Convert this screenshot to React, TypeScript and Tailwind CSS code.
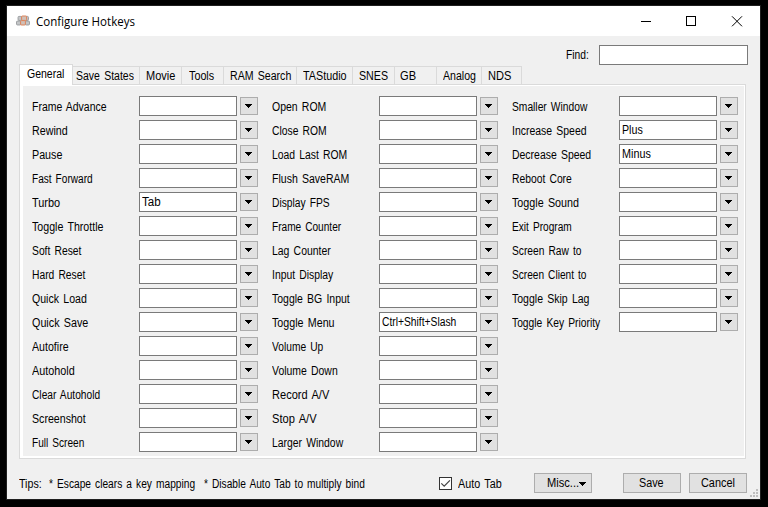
import { useLayoutEffect, useRef, useState } from "react";

/** Single line of text condensed or widened to a fixed advance width. */
function Fit({ w, children }: { w: number; children: string }) {
  const ref = useRef<HTMLSpanElement>(null);
  const [scale, setScale] = useState(1);
  useLayoutEffect(() => {
    if (ref.current) setScale(w / ref.current.offsetWidth);
  }, [w, children]);
  return (
    <span className="block shrink-0 whitespace-pre" style={{ width: w }}>
      <span ref={ref} className="inline-block origin-left align-top" style={{ transform: `scaleX(${scale})` }}>
        {children}
      </span>
    </span>
  );
}

function Arrow() {
  return (
    <svg width="7" height="4" viewBox="0 0 7 4" shapeRendering="crispEdges" className="block shrink-0">
      <path d="M0 0h7v1H0zM1 1h5v1H1zM2 2h3v1H2zM3 3h1v1H3z" fill="#000" />
    </svg>
  );
}

type Hotkey = [label: string, width: number, value?: string, valueWidth?: number];

const columns: Hotkey[][] = [
  [
    ["Frame Advance", 74.5], ["Rewind", 36], ["Pause", 30], ["Fast Forward", 60.5], ["Turbo", 28, "Tab", 18.5],
    ["Toggle Throttle", 71.5], ["Soft Reset", 49.5], ["Hard Reset", 53.5], ["Quick Load", 55], ["Quick Save", 56],
    ["Autofire", 36.5], ["Autohold", 42.5], ["Clear Autohold", 68.5], ["Screenshot", 53.5], ["Full Screen", 52.5],
  ],
  [
    ["Open ROM", 54.5], ["Close ROM", 54.5], ["Load Last ROM", 75.5], ["Flush SaveRAM", 77.5], ["Display FPS", 57.5],
    ["Frame Counter", 69.5], ["Lag Counter", 58.5], ["Input Display", 61.5], ["Toggle BG Input", 78],
    ["Toggle Menu", 62.5, "Ctrl+Shift+Slash", 74], ["Volume Up", 51.5], ["Volume Down", 66], ["Record A/V", 57.5],
    ["Stop A/V", 44.5], ["Larger Window", 71.5],
  ],
  [
    ["Smaller Window", 75.5], ["Increase Speed", 74.5, "Plus", 20.5], ["Decrease Speed", 79.5, "Minus", 28.5],
    ["Reboot Core", 59.5], ["Toggle Sound", 67], ["Exit Program", 60], ["Screen Raw to", 69.5],
    ["Screen Client to", 74.5], ["Toggle Skip Lag", 77.5], ["Toggle Key Priority", 88],
  ],
];

function HotkeyRow({ item }: { item: Hotkey }) {
  const [label, width, value, valueWidth] = item;
  return (
    <div className="flex h-5 items-center">
      <div className="w-[107px] pt-px">
        <Fit w={width}>{label}</Fit>
      </div>
      <div className="flex h-5 w-[98px] items-center border border-[#7a7a7a] bg-white pl-0.5">
        {value && <Fit w={valueWidth ?? 0}>{value}</Fit>}
      </div>
      <button className="ml-[3px] flex h-[18px] w-[18px] items-center justify-center border border-[#adadad] bg-[#e1e1e1] pr-px">
        <Arrow />
      </button>
    </div>
  );
}

export default function App() {
  return (
    <div className="h-[507px] w-[768px] overflow-hidden bg-black pl-1.5 pt-[5px] font-['Liberation_Sans',Arial,sans-serif] text-[12.5px] leading-5 text-black [word-spacing:1.5px]">
      <div className="flex h-[495px] w-[755px] flex-col border border-[#1f1f1f] bg-[#f0f0f0]">
        <div className="flex h-[30px] shrink-0 items-center bg-white pl-[9px] font-['Open_Sans','Noto_Sans',sans-serif] text-[12px] [word-spacing:0px]">
          <svg width="14" height="12" viewBox="0 0 14 12" className="mr-[6px] shrink-0">
            <g fill="#c4c6c8" stroke="#8f9296" strokeWidth=".8">
              <rect x="2" y="1.4" width="4" height="4" rx="1" />
              <rect x="9" y="1.4" width="3.5" height="4" rx="1" />
              <rect x=".5" y="6" width="4.4" height="4" rx="1" />
              <rect x="9.2" y="6" width="4.3" height="4" rx="1" />
            </g>
            <g fill="#cfc0b8" stroke="#e08358" strokeWidth="1">
              <rect x="5.6" y="1" width="5" height="4.4" rx=".8" />
              <rect x="4.6" y="5.6" width="4.8" height="4.4" rx=".8" />
            </g>
          </svg>
          <div className="pt-px"><Fit w={99}>Configure Hotkeys</Fit></div>
          <svg width="102" height="11" viewBox="0 0 102 11" className="ml-[506px] shrink-0">
            <path d="M0 5h10v1H0zM45 0h10v10H45zM46 1v8h8V1z" fill="#000" fillRule="evenodd" shapeRendering="crispEdges" />
            <path d="M91 .3l10 10M101 .3l-10 10" fill="none" stroke="#000" />
          </svg>
        </div>
        <div className="flex h-7 shrink-0 pl-[559px] pt-[9px]">
          <Fit w={23}>Find:</Fit>
          <div className="ml-[10px] h-5 w-[149px] shrink-0 border border-[#7a7a7a] bg-white" />
        </div>
        <div className="ml-3 flex h-5 shrink-0 items-end">
          <div className="z-10 -mb-px flex h-[21px] w-[54px] items-center border border-b-0 border-[#dadada] bg-white pb-[3px] pl-[7px]">
            <Fit w={37}>General</Fit>
          </div>
          <div className="flex h-[18px] w-[67px] items-center border-r border-t border-[#dadada] pl-[3px] pt-px"><Fit w={58}>Save States</Fit></div>
          <div className="flex h-[18px] w-[42px] items-center border-r border-t border-[#dadada] pl-[6px] pt-px"><Fit w={29}>Movie</Fit></div>
          <div className="flex h-[18px] w-[42px] items-center border-r border-t border-[#dadada] pl-[7px] pt-px"><Fit w={25}>Tools</Fit></div>
          <div className="flex h-[18px] w-[73px] items-center border-r border-t border-[#dadada] pl-[6px] pt-px"><Fit w={61}>RAM Search</Fit></div>
          <div className="flex h-[18px] w-[56px] items-center border-r border-t border-[#dadada] pl-[6px] pt-px"><Fit w={44}>TAStudio</Fit></div>
          <div className="flex h-[18px] w-[42px] items-center border-r border-t border-[#dadada] pl-[6px] pt-px"><Fit w={29}>SNES</Fit></div>
          <div className="flex h-[18px] w-[42px] items-center border-r border-t border-[#dadada] pl-[5px] pt-px"><Fit w={16}>GB</Fit></div>
          <div className="flex h-[18px] w-[45px] items-center border-r border-t border-[#dadada] pl-[6px] pt-px"><Fit w={33}>Analog</Fit></div>
          <div className="flex h-[18px] w-[40px] items-center border-r border-t border-[#dadada] pl-[6px] pt-px"><Fit w={23}>NDS</Fit></div>
        </div>
        <div className="ml-3 h-[375px] w-[727px] shrink-0 border border-[#dadada] bg-white pb-[2px] pl-[3px] pr-px pt-px">
          <div className="flex h-full bg-[#f0f0f0] pl-[9px] pt-[10px]">
            {columns.map((col, i) => (
              <div key={i} className="flex w-[240px] shrink-0 flex-col gap-1">
                {col.map((item) => (
                  <HotkeyRow key={item[0]} item={item} />
                ))}
              </div>
            ))}
          </div>
        </div>
        <div className="flex h-10 shrink-0 items-start pl-3 pt-[14px]">
          <div className="flex pt-px">
            <Fit w={23}>Tips:</Fit>
            <div className="ml-[7px]"><Fit w={146}>* Escape clears a key mapping</Fit></div>
            <div className="ml-[9px]"><Fit w={161}>* Disable Auto Tab to multiply bind</Fit></div>
          </div>
          <div className="ml-[74px] mt-1 h-[13px] w-[13px] shrink-0 border border-[#333] bg-white">
            <svg width="11" height="11" viewBox="0 0 11 11" className="block">
              <path d="M1.3 5.3L4.2 8.2L9.9 2.3" fill="none" stroke="#444" strokeWidth="1.2" />
            </svg>
          </div>
          <div className="ml-[6px] pt-px"><Fit w={44}>Auto Tab</Fit></div>
          <button className="ml-[32px] flex h-5 w-[58px] shrink-0 items-center border border-[#adadad] bg-[#e1e1e1] pl-3">
            <Fit w={32}>Misc...</Fit>
            <div className="pt-px"><Arrow /></div>
          </button>
          <button className="ml-[31px] flex h-5 w-[58px] shrink-0 items-center justify-center border border-[#adadad] bg-[#e1e1e1] pr-px">
            <Fit w={25}>Save</Fit>
          </button>
          <button className="ml-2 flex h-5 w-[58px] shrink-0 items-center justify-center border border-[#adadad] bg-[#e1e1e1] pr-px">
            <Fit w={34}>Cancel</Fit>
          </button>
          <svg width="8" height="8" viewBox="0 0 8 8" className="ml-[3px] mt-4 shrink-0" shapeRendering="crispEdges">
            <path d="M6 0h2v2H6zM3 3h2v2H3zM6 3h2v2H6zM0 6h2v2H0zM3 6h2v2H3zM6 6h2v2H6z" fill="#bfbfbf" />
          </svg>
        </div>
      </div>
    </div>
  );
}
